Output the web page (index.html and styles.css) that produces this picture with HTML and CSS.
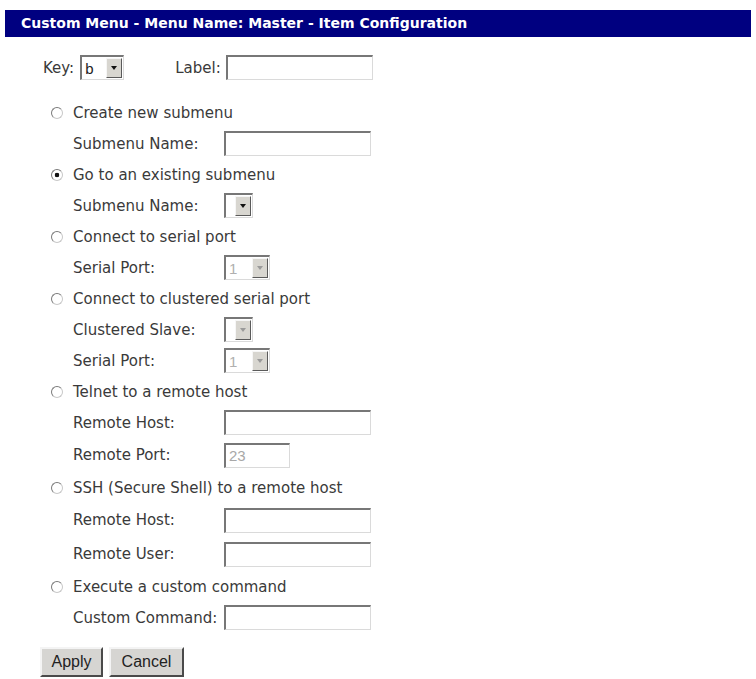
FILE: index.html
```html
<!DOCTYPE html>
<html lang="en">
<head>
    <meta charset="UTF-8">
    <meta name="viewport" content="width=device-width, initial-scale=1.0">
    <title>Custom Menu - Item Configuration</title>
    <link rel="stylesheet" href="styles.css">
</head>
<body>
    <div class="titlebar">Custom Menu - Menu Name: Master - Item Configuration</div>

    <form class="config">
        <div class="keyrow">
            <span>Key:</span>
            <span class="combo key">
                <select><option>b</option></select>
                <span class="drop"></span>
            </span>
            <span class="label-text">Label:</span>
            <input type="text" class="text">
        </div>

        <div class="options">
            <div class="row option"><input type="radio" name="action"><span>Create new submenu</span></div>
            <div class="row field"><label>Submenu Name:</label><input type="text" class="text"></div>

            <div class="row option"><input type="radio" name="action" checked><span>Go to an existing submenu</span></div>
            <div class="row field"><label>Submenu Name:</label>
                <span class="combo narrow"><select></select><span class="drop"></span></span>
            </div>

            <div class="row option"><input type="radio" name="action"><span>Connect to serial port</span></div>
            <div class="row field"><label>Serial Port:</label>
                <span class="combo port off"><select disabled><option>1</option></select><span class="drop"></span></span>
            </div>

            <div class="row option"><input type="radio" name="action"><span>Connect to clustered serial port</span></div>
            <div class="row field"><label>Clustered Slave:</label>
                <span class="combo narrow off"><select disabled></select><span class="drop"></span></span>
            </div>
            <div class="row field"><label>Serial Port:</label>
                <span class="combo port off"><select disabled><option>1</option></select><span class="drop"></span></span>
            </div>

            <div class="row option"><input type="radio" name="action"><span>Telnet to a remote host</span></div>
            <div class="row field"><label>Remote Host:</label><input type="text" class="text"></div>
            <div class="row field wide"><label>Remote Port:</label><input type="text" class="text short" value="23"></div>

            <div class="row option"><input type="radio" name="action"><span>SSH (Secure Shell) to a remote host</span></div>
            <div class="row field wide"><label>Remote Host:</label><input type="text" class="text"></div>
            <div class="row field wide"><label>Remote User:</label><input type="text" class="text"></div>

            <div class="row option"><input type="radio" name="action"><span>Execute a custom command</span></div>
            <div class="row field"><label>Custom Command:</label><input type="text" class="text"></div>
        </div>

        <div class="actions">
            <button type="button" class="btn apply">Apply</button>
            <button type="button" class="btn cancel">Cancel</button>
        </div>
    </form>
</body>
</html>
```

FILE: styles.css
```css
body { margin: 10px 5px; font-family: "DejaVu Sans", Verdana, sans-serif; font-size: 15px; color: #3a3a3a; background: #fff; }
.titlebar { height: 27px; line-height: 27px; padding-left: 16px; background: #000080; color: #fff; font-weight: bold; font-size: 14px; }

.keyrow { display: flex; align-items: center; height: 27px; margin: 17px 0 0 38px; }
.keyrow .combo { margin-left: 6px; }
.keyrow .label-text { margin-left: 51px; }
.keyrow .text { margin-left: 5px; }

.options { margin: 16px 0 0 46px; }
.row { display: flex; align-items: center; height: 31px; }
.row.wide { height: 34px; }
.option input[type=radio] { appearance: none; width: 12px; height: 12px; margin: 0 10px 0 0; border: 1px solid; border-color: #7a7a7a #c8c8c8 #c8c8c8 #7a7a7a; border-radius: 50%; background: #fff; }
.option input[type=radio]:checked { background: radial-gradient(circle, #111 0 2px, #fff 2.6px); }
.field { padding-left: 22px; }
.field label { width: 151px; flex: none; }

.text { box-sizing: border-box; width: 147px; height: 25px; padding: 0 3px; border-style: solid; border-width: 2px 1px 1px 2px; border-color: #777 #dadada #dadada #777; font: 15px "Liberation Sans", Arial, sans-serif; color: #222; }
.text.short { width: 66px; color: #a8a8a8; }

.combo { box-sizing: border-box; display: inline-flex; height: 25px; padding: 1px; border-style: solid; border-width: 2px 1px 1px 2px; border-color: #777 #dadada #dadada #777; background: #fff; }
.combo.key { width: 44px; }
.combo.narrow { width: 29px; }
.combo.port { width: 46px; }
.combo select { appearance: none; flex: 1; min-width: 0; border: none; padding: 0 2px; background: transparent; font: 15px "Liberation Sans", Arial, sans-serif; color: #222; outline: none; }
.combo select:disabled { color: #b0b0b0; opacity: 1; }
.drop { box-sizing: border-box; width: 16px; display: flex; align-items: center; justify-content: center; background: #d8d6d0; border: 1px solid; border-color: #f6f6f6 #5a5a5a #5a5a5a #f6f6f6; }
.drop::before { content: ""; border-style: solid; border-width: 4px 3.5px 0 3.5px; border-color: #111 transparent transparent transparent; }
.combo.off .drop::before { border-top-color: #9a9a9a; }

.actions { display: flex; gap: 6px; margin: 14px 0 0 35px; }
.btn { box-sizing: border-box; height: 30px; padding: 0; font: 16px "Liberation Sans", Arial, sans-serif; color: #222; background: #d6d5d2; border: 2px solid; border-color: #f4f4f4 #4a4a4a #4a4a4a #f4f4f4; }
.btn.apply { width: 63px; }
.btn.cancel { width: 75px; }
```
